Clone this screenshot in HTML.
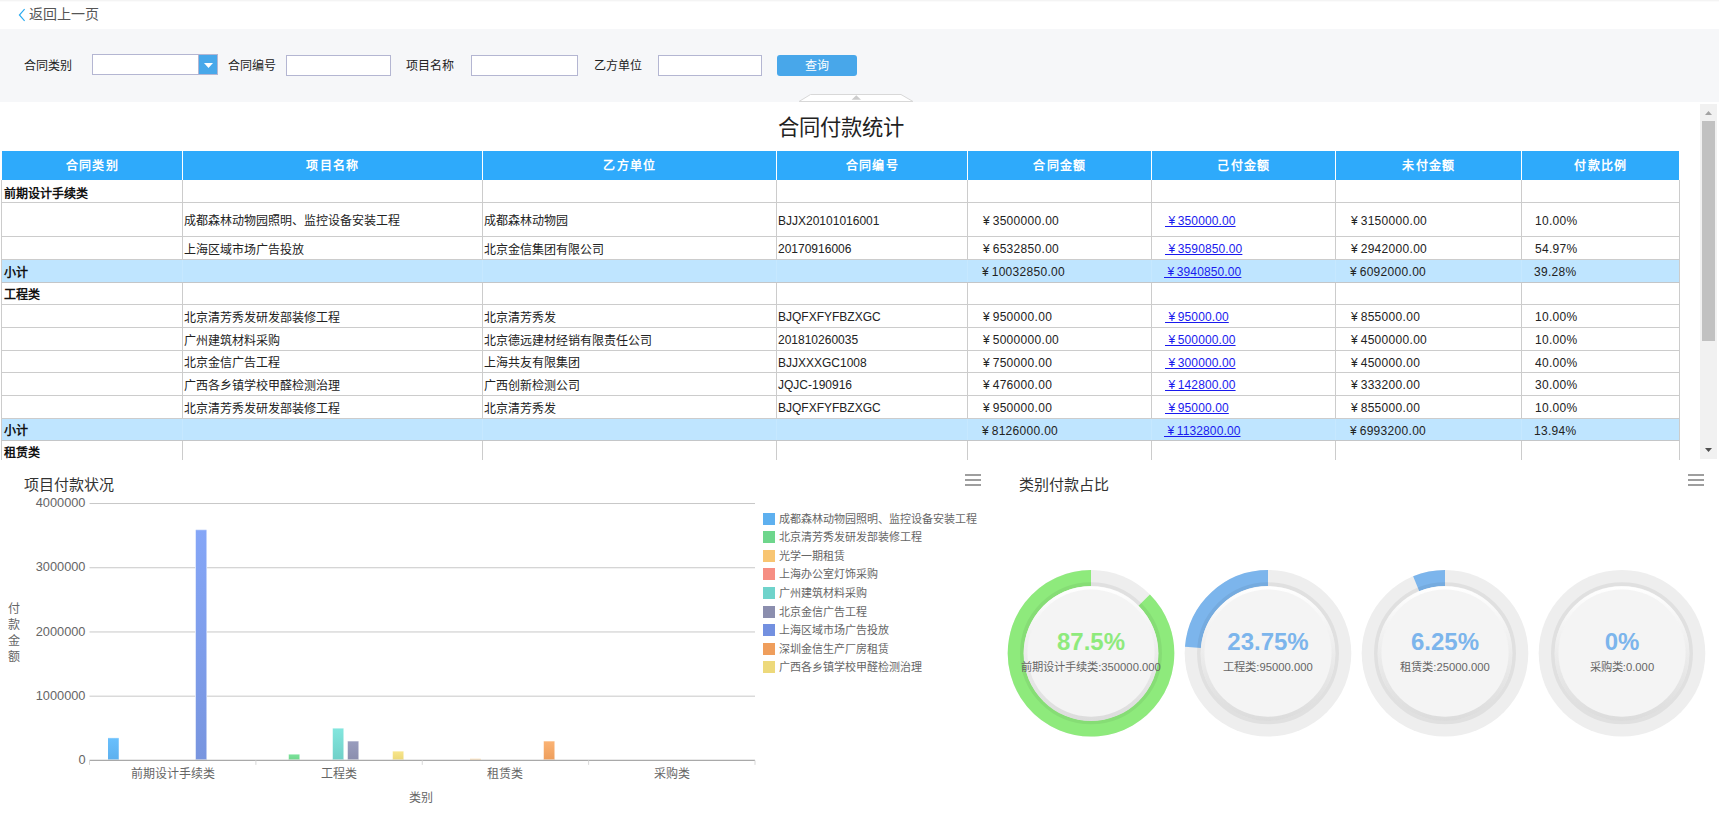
<!DOCTYPE html>
<html lang="zh-CN">
<head>
<meta charset="utf-8">
<title>合同付款统计</title>
<style>
*{box-sizing:border-box;margin:0;padding:0}
html,body{width:1719px;height:820px;overflow:hidden;background:#fff}
body{font-family:"Liberation Sans",sans-serif;font-size:12px;color:#222;position:relative}
.abs{position:absolute}
/* top */
#topline{left:0;top:0;width:1719px;height:2px;background:linear-gradient(#f4f4f4 0,#f4f4f4 50%,#fbfbfb 50%,#fbfbfb 100%)}
#back{left:29px;top:4px;height:20px;line-height:20px;font-size:14px;color:#555;white-space:nowrap}
#band{left:0;top:29px;width:1719px;height:73px;background:#f6f7f9}
.lbl{top:56px;height:21px;line-height:21px;font-size:12px;color:#222;white-space:nowrap}
.inp{top:55px;height:21px;background:#fff;border:1px solid #b4b6d2}
#sel{left:92px;top:54px;width:126px;height:21px;background:#fff;border:1px solid #b4b6d2}
#selbtn{left:199px;top:55px;width:18px;height:19px;background:#48a8ea}
#btn{left:777px;top:55px;width:80px;height:21px;background:#48a7ea;border-radius:3px;color:#fff;font-size:12px;line-height:23px;text-align:center}
/* table */
#tbl{left:0;top:102px;width:1700px;height:357px;overflow:hidden}
#ttl{left:0;top:114px;width:1681px;text-align:center;font-size:21.3px;line-height:28px;color:#222}
.hd{top:151px;height:29px;background:#2eaafb;color:#fff;font-family:"Liberation Serif",serif;font-weight:bold;font-size:12px;letter-spacing:1.4px;line-height:30px;padding-left:1px;text-align:center}
.row{left:1px;width:1679px;border-bottom:1px solid #ccc;border-left:1px solid #ccc;border-right:1px solid #ccc;background:#fff}
.row.sub{background:#bfe5ff;border-bottom-color:#c4c6c8}
.row i{position:absolute;top:0;bottom:0;width:1px;background:#ccc}
.row.sub i{background:#c6e8ff}
.row span{position:absolute;top:0;bottom:0;display:flex;align-items:center;white-space:nowrap;font-size:12px;line-height:14px;color:#222}
.row b{position:absolute;left:2px;top:0;bottom:0;display:flex;align-items:center;font-size:12px;line-height:14px;color:#111;white-space:nowrap}
.row a{color:#1a1aee;text-decoration:underline;white-space:pre;letter-spacing:.12px}
.row span.z{padding-top:4px}
.row span.n{padding-top:2px;letter-spacing:.3px}
.row span.l{padding-top:2px}
.row b{padding-top:5px}
/* scrollbar */
#sbt{left:1700px;top:104px;width:17px;height:355px;background:#f1f1f1}
#sbh{left:1702px;top:121px;width:13px;height:220px;background:#c1c1c1}
/* charts */
.ct{font-size:15px;color:#333;line-height:20px;white-space:nowrap}
.ax{font-size:12.8px;color:#666;white-space:nowrap;line-height:14px}
.cat{font-size:12px;color:#666;white-space:nowrap;line-height:14px;text-align:center;width:120px}
.lg{left:763px;width:12px;height:12px}
.lt{left:779px;font-size:11px;color:#666;line-height:14px;white-space:nowrap}
.gp{width:160px;text-align:center;font-weight:bold;font-size:24px;line-height:28px;white-space:nowrap}
.gs{width:170px;text-align:center;font-size:11.25px;line-height:14px;color:#666;white-space:nowrap}
</style>
</head>
<body>
<div class="abs" id="topline"></div>
<svg class="abs" style="left:17px;top:8px" width="10" height="14" viewBox="0 0 10 14"><path d="M7.6 1.2 L2.4 7 L7.6 12.8" fill="none" stroke="#29abf0" stroke-width="1.15"/></svg>
<div class="abs" id="back">返回上一页</div>
<div class="abs" id="band"></div>
<div class="abs lbl" style="left:24px">合同类别</div>
<div class="abs" id="sel"></div>
<div class="abs" style="left:198px;top:55px;width:1px;height:19px;background:#b4b6d2"></div>
<div class="abs" id="selbtn"><svg width="18" height="19" viewBox="0 0 18 19" style="display:block"><path d="M5 8 L14 8 L9.5 13 Z" fill="#fff"/></svg></div>
<div class="abs lbl" style="left:228px">合同编号</div>
<div class="abs inp" style="left:286px;width:105px"></div>
<div class="abs lbl" style="left:406px">项目名称</div>
<div class="abs inp" style="left:471px;width:107px"></div>
<div class="abs lbl" style="left:594px">乙方单位</div>
<div class="abs inp" style="left:658px;width:104px"></div>
<div class="abs" id="btn">查询</div>
<svg class="abs" style="left:797px;top:93px" width="118" height="10" viewBox="0 0 118 10"><path d="M2 8.5 L13.5 1.5 L104 1.5 L116 8.5 Z" fill="#fff" stroke="#d8d8d8" stroke-width="1"/><path d="M59.3 2.2 L64 6.8 L54.6 6.8 Z" fill="#ccc"/></svg>

<!-- TABLE -->
<div class="abs" id="ttl">合同付款统计</div>
<div class="abs hd" style="left:2px;width:180px">合同类别</div>
<div class="abs hd" style="left:183px;width:299px">项目名称</div>
<div class="abs hd" style="left:483px;width:293px">乙方单位</div>
<div class="abs hd" style="left:777px;width:190px">合同编号</div>
<div class="abs hd" style="left:968px;width:183px">合同金额</div>
<div class="abs hd" style="left:1152px;width:183px">己付金额</div>
<div class="abs hd" style="left:1336px;width:185px">未付金额</div>
<div class="abs hd" style="left:1522px;width:157px">付款比例</div>
<div class="abs row" style="top:180px;height:23px"><i style="left:180px"></i><i style="left:480px"></i><i style="left:774px"></i><i style="left:965px"></i><i style="left:1149px"></i><i style="left:1333px"></i><i style="left:1519px"></i><b>前期设计手续类</b></div>
<div class="abs row" style="top:203px;height:34px"><i style="left:180px"></i><i style="left:480px"></i><i style="left:774px"></i><i style="left:965px"></i><i style="left:1149px"></i><i style="left:1333px"></i><i style="left:1519px"></i><span class="z" style="left:182px;padding-top:2px">成都森林动物园照明、监控设备安装工程</span><span class="z" style="left:482px;padding-top:2px">成都森林动物园</span><span class="l" style="left:776px">BJJX20101016001</span><span class="n" style="left:981px">¥&#8201;3500000.00</span><span class="n" style="left:1163px"><a> ¥&#8201;350000.00</a></span><span class="n" style="left:1349px">¥&#8201;3150000.00</span><span class="n" style="left:1533px">10.00%</span></div>
<div class="abs row" style="top:237px;height:23px"><i style="left:180px"></i><i style="left:480px"></i><i style="left:774px"></i><i style="left:965px"></i><i style="left:1149px"></i><i style="left:1333px"></i><i style="left:1519px"></i><span class="z" style="left:182px">上海区域市场广告投放</span><span class="z" style="left:482px">北京金信集团有限公司</span><span class="l" style="left:776px">20170916006</span><span class="n" style="left:981px">¥&#8201;6532850.00</span><span class="n" style="left:1163px"><a> ¥&#8201;3590850.00</a></span><span class="n" style="left:1349px">¥&#8201;2942000.00</span><span class="n" style="left:1533px">54.97%</span></div>
<div class="abs row sub" style="top:260px;height:23px"><i style="left:180px"></i><i style="left:480px"></i><i style="left:774px"></i><i style="left:965px"></i><i style="left:1149px"></i><i style="left:1333px"></i><i style="left:1519px"></i><b style="padding-top:3px">小计</b><span class="n" style="left:980px">¥&#8201;10032850.00</span><span class="n" style="left:1162px"><a> ¥&#8201;3940850.00</a></span><span class="n" style="left:1348px">¥&#8201;6092000.00</span><span class="n" style="left:1532px">39.28%</span></div>
<div class="abs row" style="top:283px;height:22px"><i style="left:180px"></i><i style="left:480px"></i><i style="left:774px"></i><i style="left:965px"></i><i style="left:1149px"></i><i style="left:1333px"></i><i style="left:1519px"></i><b style="padding-top:3px">工程类</b></div>
<div class="abs row" style="top:305px;height:23px"><i style="left:180px"></i><i style="left:480px"></i><i style="left:774px"></i><i style="left:965px"></i><i style="left:1149px"></i><i style="left:1333px"></i><i style="left:1519px"></i><span class="z" style="left:182px">北京清芳秀发研发部装修工程</span><span class="z" style="left:482px">北京清芳秀发</span><span class="l" style="left:776px">BJQFXFYFBZXGC</span><span class="n" style="left:981px">¥&#8201;950000.00</span><span class="n" style="left:1163px"><a> ¥&#8201;95000.00</a></span><span class="n" style="left:1349px">¥&#8201;855000.00</span><span class="n" style="left:1533px">10.00%</span></div>
<div class="abs row" style="top:328px;height:23px"><i style="left:180px"></i><i style="left:480px"></i><i style="left:774px"></i><i style="left:965px"></i><i style="left:1149px"></i><i style="left:1333px"></i><i style="left:1519px"></i><span class="z" style="left:182px">广州建筑材料采购</span><span class="z" style="left:482px">北京德远建材经销有限责任公司</span><span class="l" style="left:776px">201810260035</span><span class="n" style="left:981px">¥&#8201;5000000.00</span><span class="n" style="left:1163px"><a> ¥&#8201;500000.00</a></span><span class="n" style="left:1349px">¥&#8201;4500000.00</span><span class="n" style="left:1533px">10.00%</span></div>
<div class="abs row" style="top:351px;height:22px"><i style="left:180px"></i><i style="left:480px"></i><i style="left:774px"></i><i style="left:965px"></i><i style="left:1149px"></i><i style="left:1333px"></i><i style="left:1519px"></i><span class="z" style="left:182px;padding-top:2px">北京金信广告工程</span><span class="z" style="left:482px;padding-top:2px">上海共友有限集团</span><span class="l" style="left:776px">BJJXXXGC1008</span><span class="n" style="left:981px">¥&#8201;750000.00</span><span class="n" style="left:1163px"><a> ¥&#8201;300000.00</a></span><span class="n" style="left:1349px">¥&#8201;450000.00</span><span class="n" style="left:1533px">40.00%</span></div>
<div class="abs row" style="top:373px;height:23px"><i style="left:180px"></i><i style="left:480px"></i><i style="left:774px"></i><i style="left:965px"></i><i style="left:1149px"></i><i style="left:1333px"></i><i style="left:1519px"></i><span class="z" style="left:182px">广西各乡镇学校甲醛检测治理</span><span class="z" style="left:482px">广西创新检测公司</span><span class="l" style="left:776px">JQJC-190916</span><span class="n" style="left:981px">¥&#8201;476000.00</span><span class="n" style="left:1163px"><a> ¥&#8201;142800.00</a></span><span class="n" style="left:1349px">¥&#8201;333200.00</span><span class="n" style="left:1533px">30.00%</span></div>
<div class="abs row" style="top:396px;height:23px"><i style="left:180px"></i><i style="left:480px"></i><i style="left:774px"></i><i style="left:965px"></i><i style="left:1149px"></i><i style="left:1333px"></i><i style="left:1519px"></i><span class="z" style="left:182px">北京清芳秀发研发部装修工程</span><span class="z" style="left:482px">北京清芳秀发</span><span class="l" style="left:776px">BJQFXFYFBZXGC</span><span class="n" style="left:981px">¥&#8201;950000.00</span><span class="n" style="left:1163px"><a> ¥&#8201;95000.00</a></span><span class="n" style="left:1349px">¥&#8201;855000.00</span><span class="n" style="left:1533px">10.00%</span></div>
<div class="abs row sub" style="top:419px;height:22px"><i style="left:180px"></i><i style="left:480px"></i><i style="left:774px"></i><i style="left:965px"></i><i style="left:1149px"></i><i style="left:1333px"></i><i style="left:1519px"></i><b style="padding-top:3px">小计</b><span class="n" style="left:980px">¥&#8201;8126000.00</span><span class="n" style="left:1162px"><a> ¥&#8201;1132800.00</a></span><span class="n" style="left:1348px">¥&#8201;6993200.00</span><span class="n" style="left:1532px">13.94%</span></div>
<div class="abs row" style="top:441px;height:19px;border-bottom:none"><i style="left:180px"></i><i style="left:480px"></i><i style="left:774px"></i><i style="left:965px"></i><i style="left:1149px"></i><i style="left:1333px"></i><i style="left:1519px"></i><b>租赁类</b></div>
<div class="abs" id="sbt"></div>
<div class="abs" id="sbh"></div>
<svg class="abs" style="left:1700px;top:104px" width="17" height="17" viewBox="0 0 17 17"><path d="M8.5 7 L12 11 L5 11 Z" fill="#a3a3a3"/></svg>
<svg class="abs" style="left:1700px;top:442px" width="17" height="17" viewBox="0 0 17 17"><path d="M5 6 L12 6 L8.5 10 Z" fill="#505050"/></svg>

<div class="abs ct" style="left:24px;top:475px">项目付款状况</div>
<svg class="abs" style="left:965px;top:472px" width="18" height="16" viewBox="0 0 18 16"><path d="M0 2h16v2H0zM0 7h16v2H0zM0 12h16v2H0z" fill="#9e9e9e"/></svg>
<svg class="abs" style="left:0;top:460px" width="1000" height="360" viewBox="0 460 1000 360"><defs><linearGradient id="g0" x1="0" y1="0" x2="0" y2="1"><stop offset="0" stop-color="#69c0fd"/><stop offset="1" stop-color="#5db0ee"/></linearGradient><linearGradient id="g1" x1="0" y1="0" x2="0" y2="1"><stop offset="0" stop-color="#7be39b"/><stop offset="1" stop-color="#6fd68c"/></linearGradient><linearGradient id="g2" x1="0" y1="0" x2="0" y2="1"><stop offset="0" stop-color="#fdd08a"/><stop offset="1" stop-color="#f5c378"/></linearGradient><linearGradient id="g3" x1="0" y1="0" x2="0" y2="1"><stop offset="0" stop-color="#f7897d"/><stop offset="1" stop-color="#f08074"/></linearGradient><linearGradient id="g4" x1="0" y1="0" x2="0" y2="1"><stop offset="0" stop-color="#83e6de"/><stop offset="1" stop-color="#6fd0c8"/></linearGradient><linearGradient id="g5" x1="0" y1="0" x2="0" y2="1"><stop offset="0" stop-color="#999dbe"/><stop offset="1" stop-color="#8b8eae"/></linearGradient><linearGradient id="g6" x1="0" y1="0" x2="0" y2="1"><stop offset="0" stop-color="#85a6f7"/><stop offset="1" stop-color="#7895df"/></linearGradient><linearGradient id="g7" x1="0" y1="0" x2="0" y2="1"><stop offset="0" stop-color="#fbb374"/><stop offset="1" stop-color="#ee9e5c"/></linearGradient><linearGradient id="g8" x1="0" y1="0" x2="0" y2="1"><stop offset="0" stop-color="#f8e68c"/><stop offset="1" stop-color="#ecd878"/></linearGradient></defs><path d="M89.5 696.18 H755" stroke="#c8c8c8" stroke-width="1"/><path d="M89.5 631.96 H755" stroke="#c8c8c8" stroke-width="1"/><path d="M89.5 567.74 H755" stroke="#c8c8c8" stroke-width="1"/><path d="M89.5 503.52 H755" stroke="#c8c8c8" stroke-width="1"/><rect x="107.40" y="737.32" width="11.95" height="23.08" fill="#fff"/><rect x="108.00" y="737.92" width="10.75" height="21.98" fill="url(#g0)"/><rect x="108.00" y="759.00" width="10.75" height="0.9" fill="#fff" fill-opacity="0.5"/><rect x="108.00" y="737.92" width="10.75" height="0.6" fill="#fff" fill-opacity="0.35"/><rect x="195.15" y="529.20" width="11.95" height="231.20" fill="#fff"/><rect x="195.75" y="529.80" width="10.75" height="230.10" fill="url(#g6)"/><rect x="195.75" y="759.00" width="10.75" height="0.9" fill="#fff" fill-opacity="0.5"/><rect x="195.75" y="529.80" width="10.75" height="0.6" fill="#fff" fill-opacity="0.35"/><rect x="288.15" y="753.70" width="11.95" height="6.70" fill="#fff"/><rect x="288.75" y="754.30" width="10.75" height="5.60" fill="url(#g1)"/><rect x="288.75" y="759.00" width="10.75" height="0.9" fill="#fff" fill-opacity="0.5"/><rect x="288.75" y="754.30" width="10.75" height="0.6" fill="#fff" fill-opacity="0.35"/><rect x="332.15" y="727.69" width="11.95" height="32.71" fill="#fff"/><rect x="332.75" y="728.29" width="10.75" height="31.61" fill="url(#g4)"/><rect x="332.75" y="759.00" width="10.75" height="0.9" fill="#fff" fill-opacity="0.5"/><rect x="332.75" y="728.29" width="10.75" height="0.6" fill="#fff" fill-opacity="0.35"/><rect x="347.15" y="740.53" width="11.95" height="19.87" fill="#fff"/><rect x="347.75" y="741.13" width="10.75" height="18.77" fill="url(#g5)"/><rect x="347.75" y="759.00" width="10.75" height="0.9" fill="#fff" fill-opacity="0.5"/><rect x="347.75" y="741.13" width="10.75" height="0.6" fill="#fff" fill-opacity="0.35"/><rect x="392.15" y="750.63" width="11.95" height="9.77" fill="#fff"/><rect x="392.75" y="751.23" width="10.75" height="8.67" fill="url(#g8)"/><rect x="392.75" y="759.00" width="10.75" height="0.9" fill="#fff" fill-opacity="0.5"/><rect x="392.75" y="751.23" width="10.75" height="0.6" fill="#fff" fill-opacity="0.35"/><rect x="469.40" y="758.19" width="11.95" height="2.21" fill="#fff"/><rect x="470.00" y="758.79" width="10.75" height="1.11" fill="url(#g2)"/><rect x="470.00" y="759.00" width="10.75" height="0.9" fill="#fff" fill-opacity="0.5"/><rect x="470.00" y="758.79" width="10.75" height="0.6" fill="#fff" fill-opacity="0.35"/><rect x="543.15" y="740.53" width="11.95" height="19.87" fill="#fff"/><rect x="543.75" y="741.13" width="10.75" height="18.77" fill="url(#g7)"/><rect x="543.75" y="759.00" width="10.75" height="0.9" fill="#fff" fill-opacity="0.5"/><rect x="543.75" y="741.13" width="10.75" height="0.6" fill="#fff" fill-opacity="0.35"/><path d="M89.5 760.40 H755" stroke="#a9a9a9" stroke-width="1.1"/><path d="M89.50 760.40 V764.90" stroke="#d8d8d8" stroke-width="1"/><path d="M255.88 760.40 V764.90" stroke="#d8d8d8" stroke-width="1"/><path d="M422.25 760.40 V764.90" stroke="#d8d8d8" stroke-width="1"/><path d="M588.62 760.40 V764.90" stroke="#d8d8d8" stroke-width="1"/><path d="M755.00 760.40 V764.90" stroke="#d8d8d8" stroke-width="1"/></svg>
<div class="abs ax" style="right:1633.5px;top:752.9px">0</div>
<div class="abs ax" style="right:1633.5px;top:688.7px">1000000</div>
<div class="abs ax" style="right:1633.5px;top:624.5px">2000000</div>
<div class="abs ax" style="right:1633.5px;top:560.2px">3000000</div>
<div class="abs ax" style="right:1633.5px;top:496.0px">4000000</div>
<div class="abs cat" style="left:7px;width:13px;top:602px">付</div>
<div class="abs cat" style="left:7px;width:13px;top:618px">款</div>
<div class="abs cat" style="left:7px;width:13px;top:634px">金</div>
<div class="abs cat" style="left:7px;width:13px;top:650px">额</div>
<div class="abs cat" style="left:112.7px;top:767px">前期设计手续类</div>
<div class="abs cat" style="left:279.1px;top:767px">工程类</div>
<div class="abs cat" style="left:445.4px;top:767px">租赁类</div>
<div class="abs cat" style="left:611.8px;top:767px">采购类</div>
<div class="abs cat" style="left:360.5px;top:791px">类别</div>
<div class="abs lg" style="top:513px;background:#5eb0ef"></div><div class="abs lt" style="top:512px">成都森林动物园照明、监控设备安装工程</div>
<div class="abs lg" style="top:531px;background:#6ed68c"></div><div class="abs lt" style="top:530px">北京清芳秀发研发部装修工程</div>
<div class="abs lg" style="top:550px;background:#f8c572"></div><div class="abs lt" style="top:549px">光学一期租赁</div>
<div class="abs lg" style="top:568px;background:#f68e83"></div><div class="abs lt" style="top:567px">上海办公室灯饰采购</div>
<div class="abs lg" style="top:587px;background:#6fd3cb"></div><div class="abs lt" style="top:586px">广州建筑材料采购</div>
<div class="abs lg" style="top:606px;background:#8b8eae"></div><div class="abs lt" style="top:605px">北京金信广告工程</div>
<div class="abs lg" style="top:624px;background:#7390e0"></div><div class="abs lt" style="top:623px">上海区域市场广告投放</div>
<div class="abs lg" style="top:643px;background:#ef9e5c"></div><div class="abs lt" style="top:642px">深圳金信生产厂房租赁</div>
<div class="abs lg" style="top:661px;background:#edd97b"></div><div class="abs lt" style="top:660px">广西各乡镇学校甲醛检测治理</div>
<div class="abs ct" style="left:1019px;top:475px">类别付款占比</div>
<svg class="abs" style="left:1688px;top:472px" width="18" height="16" viewBox="0 0 18 16"><path d="M0 2h16v2H0zM0 7h16v2H0zM0 12h16v2H0z" fill="#9e9e9e"/></svg>
<svg class="abs" style="left:1000px;top:560px" width="719" height="190" viewBox="1000 560 719 190"><defs><linearGradient id="gb" x1="0" y1="0" x2="0" y2="1"><stop offset="0" stop-color="#ffffff"/><stop offset="0.5" stop-color="#ececec"/><stop offset="1" stop-color="#dcdcdc"/></linearGradient></defs><circle cx="1091" cy="653.3" r="83.3" fill="#eeeeee"/><path d="M1091 578.05 A75.25 75.25 0 1 0 1144.21 600.09" fill="none" stroke="#8eea7c" stroke-width="16.10"/><circle cx="1091" cy="653.3" r="69.10" fill="none" stroke="rgba(0,0,0,0.055)" stroke-width="3.8"/><circle cx="1091" cy="653.5999999999999" r="67.40" fill="url(#gb)"/><circle cx="1091" cy="653.0999999999999" r="63.6" fill="#f4f4f4"/><circle cx="1268" cy="653.3" r="83.3" fill="#eeeeee"/><path d="M1268 578.05 A75.25 75.25 0 0 0 1192.98 647.40" fill="none" stroke="#7cb5ec" stroke-width="16.10"/><circle cx="1268" cy="653.3" r="69.10" fill="none" stroke="rgba(0,0,0,0.055)" stroke-width="3.8"/><circle cx="1268" cy="653.5999999999999" r="67.40" fill="url(#gb)"/><circle cx="1268" cy="653.0999999999999" r="63.6" fill="#f4f4f4"/><circle cx="1445" cy="653.3" r="83.3" fill="#eeeeee"/><path d="M1445 578.05 A75.25 75.25 0 0 0 1416.20 583.78" fill="none" stroke="#7cb5ec" stroke-width="16.10"/><circle cx="1445" cy="653.3" r="69.10" fill="none" stroke="rgba(0,0,0,0.055)" stroke-width="3.8"/><circle cx="1445" cy="653.5999999999999" r="67.40" fill="url(#gb)"/><circle cx="1445" cy="653.0999999999999" r="63.6" fill="#f4f4f4"/><circle cx="1622" cy="653.3" r="83.3" fill="#eeeeee"/><circle cx="1622" cy="653.3" r="69.10" fill="none" stroke="rgba(0,0,0,0.055)" stroke-width="3.8"/><circle cx="1622" cy="653.5999999999999" r="67.40" fill="url(#gb)"/><circle cx="1622" cy="653.0999999999999" r="63.6" fill="#f4f4f4"/></svg>
<div class="abs gp" style="left:1011px;top:628px;color:#8eea7c">87.5%</div>
<div class="abs gs" style="left:1006px;top:660px">前期设计手续类:350000.000</div>
<div class="abs gp" style="left:1188px;top:628px;color:#7cb5ec">23.75%</div>
<div class="abs gs" style="left:1183px;top:660px">工程类:95000.000</div>
<div class="abs gp" style="left:1365px;top:628px;color:#7cb5ec">6.25%</div>
<div class="abs gs" style="left:1360px;top:660px">租赁类:25000.000</div>
<div class="abs gp" style="left:1542px;top:628px;color:#7cb5ec">0%</div>
<div class="abs gs" style="left:1537px;top:660px">采购类:0.000</div>
</body>
</html>
